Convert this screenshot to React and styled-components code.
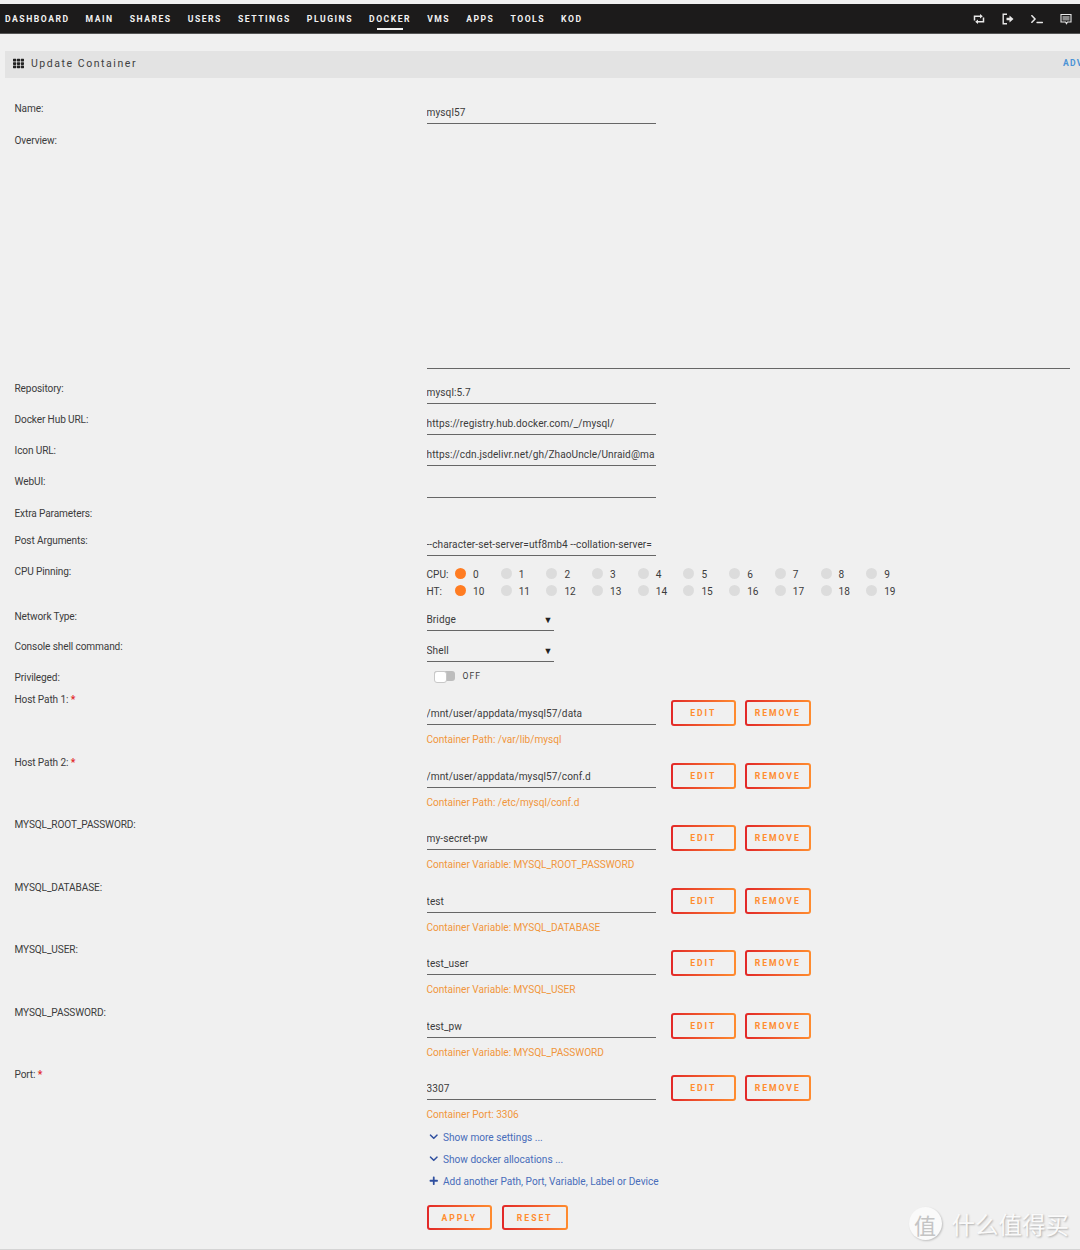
import React from 'react';
import styled, { createGlobalStyle } from 'styled-components';
import { FaTerminal, FaTh, FaChevronDown, FaPlus } from 'react-icons/fa';

const Global = createGlobalStyle`
  html, body { margin: 0; padding: 0; background: #f0f0f0; overflow: hidden; }
  * { box-sizing: border-box; }
`;
const FONT = `Roboto, "Noto Sans", "Liberation Sans", sans-serif`;

const Page = styled.div`
  position: relative;
  width: 1080px;
  height: 1250px;
  overflow: hidden;
  background: #f0f0f0;
  border-bottom: 1px solid #d4d4d4;
  font-family: ${FONT};
  font-size: 10.1px;
  color: #3c3c3c;
  padding-top: 4px;
`;
const Nav = styled.nav`
  height: 30px;
  background: #1c1b1b;
  border-bottom: 1px solid #555;
  display: flex;
  align-items: center;
  padding: 0 8.5px 0 5px;
`;
const NavList = styled.div`
  display: flex;
  gap: 16px;
  flex: 1;
`;
const NavItem = styled.span`
  position: relative;
  color: #f2f2f2;
  font-size: 8.6px;
  font-weight: 700;
  letter-spacing: 1.53px;
  line-height: 12px;
  &::after {
    content: '';
    display: ${p => (p.$active ? 'block' : 'none')};
    position: absolute;
    left: 8px;
    right: 8px;
    bottom: -5px;
    height: 1.5px;
    background: #f2f2f2;
  }
`;
const NavIcons = styled.div`
  display: flex;
  align-items: center;
  gap: 17px;
  color: #e8e8e8;
  svg { display: block; width: 12px; height: 12px; }
`;
const TitleBar = styled.div`
  margin: 17px 0 0 5px;
  height: 27px;
  background: #e3e3e3;
  display: flex;
  align-items: center;
  padding: 0 0 3px 8px;
`;
const TitleText = styled.div`
  flex: 1;
  display: flex;
  align-items: center;
  gap: 7px;
  font-size: 10.5px;
  letter-spacing: 1.55px;
  color: #404040;
  svg { width: 11px; height: 11px; color: #222; }
`;
const AdvLink = styled.span`
  flex: 0 0 17px;
  overflow: hidden;
  white-space: nowrap;
  color: #4b93d6;
  font-size: 8.6px;
  font-weight: 700;
  letter-spacing: 1.2px;
`;
const Form = styled.div`
  padding-top: 23px;
`;
const Row = styled.div`
  display: grid;
  grid-template-columns: 412px 1fr;
  padding-left: 14.5px;
  height: ${p => p.$h}px;
`;
const Label = styled.div`
  line-height: 14px;
  padding-top: 1px;
  letter-spacing: -0.12px;
`;
const Required = styled.span`
  color: #e22828;
  font-weight: 700;
`;
const Field = styled.div`
  width: ${p => p.$w || 229}px;
  height: ${p => p.$height || 23}px;
  border-bottom: 1.5px solid #666;
  display: flex;
  align-items: flex-end;
  justify-content: space-between;
  overflow: hidden;
  white-space: nowrap;
  line-height: 14px;
  padding-bottom: 3px;
  letter-spacing: 0.08px;
`;
const Caret = styled.span`
  font-size: 9px;
  color: #222;
  padding-right: 1px;
`;
const PinGroup = styled.div`
  padding-top: 1.5px;
`;
const PinRow = styled.div`
  display: flex;
  align-items: center;
  height: 17.5px;
`;
const PinLabel = styled.span`
  width: 28.5px;
`;
const Pin = styled.span`
  width: 45.7px;
  display: flex;
  align-items: center;
  gap: 7px;
`;
const Dot = styled.i`
  width: 11px;
  height: 11px;
  border-radius: 50%;
  margin-top: -2px;
  background: ${p => (p.$on ? '#ff7c22' : '#dcdcdc')};
`;
const ToggleRow = styled.div`
  display: flex;
  align-items: center;
  gap: 8px;
  padding: 0 0 0 7px;
  height: 12px;
  font-size: 8.6px;
  letter-spacing: 1px;
`;
const Toggle = styled.span`
  position: relative;
  width: 21px;
  height: 10px;
  background: #bdbdbd;
  border-radius: 3px;
  &::before {
    content: '';
    position: absolute;
    left: 0;
    top: 0;
    width: 11px;
    height: 10px;
    border-radius: 3px;
    background: #fff;
    border: 1px solid #c8c8c8;
  }
`;
const EntryLine = styled.div`
  display: flex;
  align-items: flex-start;
`;
const Button = styled.span`
  display: flex;
  align-items: center;
  justify-content: center;
  width: 65.5px;
  height: ${p => p.$height || 26}px;
  margin-left: ${p => p.$ml || 0}px;
  margin-top: ${p => p.$mt || 0}px;
  border: 2px solid transparent;
  border-radius: 3px;
  background: linear-gradient(#f0f0f0, #f0f0f0) padding-box,
    linear-gradient(90deg, #e22828, #ff8c2f) border-box;
  color: #ff8c2f;
  font-size: 8.6px;
  font-weight: 700;
  letter-spacing: 2px;
`;
const Caption = styled.div`
  color: #f0963c;
  line-height: 14px;
  margin-top: 7px;
  letter-spacing: -0.02px;
`;
const Links = styled.div`
  padding-left: 426.5px;
`;
const LinkLine = styled.div`
  height: 22px;
  display: flex;
  align-items: center;
  gap: 5px;
  color: #486dba;
  padding-left: 2px;
  svg { width: 9.5px; height: 9.5px; color: #2f4f9f; }
`;
const Actions = styled.div`
  display: flex;
  gap: 10px;
  padding: 13px 0 0 426.5px;
`;
const Watermark = styled.div`
  position: absolute;
  right: 11px;
  bottom: 9px;
  display: flex;
  align-items: center;
  gap: 10px;
  font-family: "Noto Sans CJK SC", sans-serif;
  color: #fafafa;
  text-shadow: 1px 1px 2px rgba(0, 0, 0, 0.28);
  font-size: 23.5px;
  line-height: 32px;
`;
const Badge = styled.span`
  width: 33px;
  height: 33px;
  border-radius: 50%;
  background: #fafafa;
  box-shadow: 1px 1px 2px rgba(0, 0, 0, 0.2);
  color: #c4c4c4;
  text-shadow: none;
  font-size: 22px;
  display: flex;
  align-items: center;
  justify-content: center;
`;

const nav = ['DASHBOARD','MAIN','SHARES','USERS','SETTINGS','PLUGINS','DOCKER','VMS','APPS','TOOLS','KOD'];
const entries = [
  ['Host Path 1:', true, '/mnt/user/appdata/mysql57/data', 'Container Path: /var/lib/mysql'],
  ['Host Path 2:', true, '/mnt/user/appdata/mysql57/conf.d', 'Container Path: /etc/mysql/conf.d'],
  ['MYSQL_ROOT_PASSWORD:', false, 'my-secret-pw', 'Container Variable: MYSQL_ROOT_PASSWORD'],
  ['MYSQL_DATABASE:', false, 'test', 'Container Variable: MYSQL_DATABASE'],
  ['MYSQL_USER:', false, 'test_user', 'Container Variable: MYSQL_USER'],
  ['MYSQL_PASSWORD:', false, 'test_pw', 'Container Variable: MYSQL_PASSWORD'],
  ['Port:', true, '3307', 'Container Port: 3306'],
];

const RepeatIcon = () => (
  <svg viewBox="0 0 12 12" fill="none">
    <path d="M1.5 7.5V3.2h6" stroke="currentColor" strokeWidth="1.5" />
    <path d="M7 1l2.8 2.2L7 5.4z" fill="currentColor" />
    <path d="M10.5 4.5v4.3h-6" stroke="currentColor" strokeWidth="1.5" />
    <path d="M5 6.6L2.2 8.8 5 11z" fill="currentColor" />
  </svg>
);
const SignOutIcon = () => (
  <svg viewBox="0 0 12 12" fill="none">
    <path d="M5 1.2H1.2v9.6H5" stroke="currentColor" strokeWidth="1.4" />
    <path d="M4.5 4.7h3V2.6L11.5 6l-4 3.4V7.3h-3z" fill="currentColor" />
  </svg>
);
const ChatIcon = () => (
  <svg viewBox="0 0 12 12" fill="none">
    <path d="M1 1.5h10v7.5H7.5l-1 1.6-1-1.6H1z" stroke="currentColor" strokeWidth="1.1" />
    <path d="M2.5 3h7v4.5h-7z" fill="currentColor" fillOpacity="0.55" />
  </svg>
);

const Pins = ({ label, base }) => (
  <PinRow>
    <PinLabel>{label}</PinLabel>
    {Array.from({ length: 10 }, (_, i) => (
      <Pin key={i}>
        <Dot $on={i === 0} />
        {base + i}
      </Pin>
    ))}
  </PinRow>
);

export default function App() {
  return (
    <Page>
      <Global />
      <Nav>
        <NavList>
          {nav.map(n => <NavItem key={n} $active={n === 'DOCKER'}>{n}</NavItem>)}
        </NavList>
        <NavIcons>
          <RepeatIcon />
          <SignOutIcon />
          <FaTerminal />
          <ChatIcon />
        </NavIcons>
      </Nav>
      <TitleBar>
        <TitleText><FaTh />Update Container</TitleText>
        <AdvLink>ADVANCED VIEW</AdvLink>
      </TitleBar>
      <Form>
        <Row $h={32}><Label>Name:</Label><Field>mysql57</Field></Row>
        <Row $h={248}><Label>Overview:</Label><Field $w={643} $height={236} /></Row>
        <Row $h={31}><Label>Repository:</Label><Field $height={22.5}>mysql:5.7</Field></Row>
        <Row $h={31}><Label>Docker Hub URL:</Label><Field $height={22.5}>https://registry.hub.docker.com/_/mysql/</Field></Row>
        <Row $h={31}><Label>Icon URL:</Label><Field $height={22.5}>https://cdn.jsdelivr.net/gh/ZhaoUncle/Unraid@ma</Field></Row>
        <Row $h={32}><Label>WebUI:</Label><Field $height={23.5} /></Row>
        <Row $h={27}><Label>Extra Parameters:</Label><div /></Row>
        <Row $h={31}><Label>Post Arguments:</Label><Field $height={22.5}>--character-set-server=utf8mb4 --collation-server=</Field></Row>
        <Row $h={45}>
          <Label>CPU Pinning:</Label>
          <PinGroup><Pins label="CPU:" base={0} /><Pins label="HT:" base={10} /></PinGroup>
        </Row>
        <Row $h={30}><Label>Network Type:</Label><Field $w={127} $height={22}>Bridge<Caret>▼</Caret></Field></Row>
        <Row $h={31}><Label>Console shell command:</Label><Field $w={127} $height={22.5}>Shell<Caret>▼</Caret></Field></Row>
        <Row $h={22}><Label>Privileged:</Label><ToggleRow><Toggle />OFF</ToggleRow></Row>
        {entries.map(([label, req, value, caption], i) => (
          <Row key={label} $h={i === entries.length - 1 ? 59 : 62.5}>
            <Label>{label} {req && <Required>*</Required>}</Label>
            <div>
              <EntryLine>
                <Field $height={33}>{value}</Field>
                <Button $ml={15} $mt={8}>EDIT</Button>
                <Button $ml={9} $mt={8}>REMOVE</Button>
              </EntryLine>
              <Caption>{caption}</Caption>
            </div>
          </Row>
        ))}
        <Links>
          <LinkLine><FaChevronDown />Show more settings ...</LinkLine>
          <LinkLine><FaChevronDown />Show docker allocations ...</LinkLine>
          <LinkLine><FaPlus />Add another Path, Port, Variable, Label or Device</LinkLine>
        </Links>
        <Actions>
          <Button $height={25}>APPLY</Button>
          <Button $height={25}>RESET</Button>
        </Actions>
      </Form>
      <Watermark><Badge>值</Badge>什么值得买</Watermark>
    </Page>
  );
}
